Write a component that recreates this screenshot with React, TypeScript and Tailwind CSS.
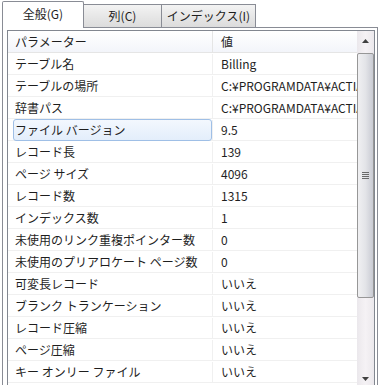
const rows: [string, string][] = [
  ['テーブル名', 'Billing'],
  ['テーブルの場所', 'C:¥PROGRAMDATA¥ACTIAN¥PSQL¥DEMODATA'],
  ['辞書パス', 'C:¥PROGRAMDATA¥ACTIAN¥PSQL¥DEMODATA'],
  ['ファイル バージョン', '9.5'],
  ['レコード長', '139'],
  ['ページ サイズ', '4096'],
  ['レコード数', '1315'],
  ['インデックス数', '1'],
  ['未使用のリンク重複ポインター数', '0'],
  ['未使用のプリアロケート ページ数', '0'],
  ['可変長レコード', 'いいえ'],
  ['ブランク トランケーション', 'いいえ'],
  ['レコード圧縮', 'いいえ'],
  ['ページ圧縮', 'いいえ'],
  ['キー オンリー ファイル', 'いいえ'],
]

const font = { fontFamily: '"Noto Sans CJK JP", "Noto Sans", sans-serif' }

export default function App() {
  return (
    <div
      className="relative h-[385px] w-[379px] overflow-hidden bg-white text-[12px] text-[#1e1e1e]"
      style={font}
    >
      {/* tabs */}
      <div className="flex h-[28px] items-end pl-[2px]">
        <div className="relative z-10 flex h-[27px] w-[82px] items-center justify-center rounded-t-[2px] border border-b-0 border-[#898c95] bg-white pb-[2px]">
          全般(G)
        </div>
        <div className="mb-[1px] flex h-[23px] w-[78px] items-center justify-center border border-b-0 border-l-0 border-[#898c95] bg-gradient-to-b from-[#f3f3f3] to-[#dcdcdc]">
          列(C)
        </div>
        <div className="mb-[1px] flex h-[23px] w-[94px] items-center justify-center border border-b-0 border-l-0 border-[#898c95] bg-gradient-to-b from-[#f3f3f3] to-[#dcdcdc]">
          インデックス(I)
        </div>
      </div>

      {/* panel */}
      <div className="-mt-[1px] ml-[2px] mr-[1px] h-[400px] border border-b-0 border-[#898c95] bg-white pl-[4px] pr-[2px] pt-[2px]">
        <div className="flex h-[400px] border border-[#828790]">
          <div className="flex-1 overflow-hidden">
            {/* header */}
            <div className="flex h-[22px] items-center border-b border-[#e5e5e5] bg-gradient-to-b from-white to-[#f3f5fa]">
              <div className="flex h-full w-[205px] items-center border-r border-[#e5e5e5] pl-[7px]">
                パラメーター
              </div>
              <div className="pl-[8px]">値</div>
            </div>
            {rows.map(([k, v], i) => (
              <div key={i} className="flex h-[22px] border-b border-[#f0f0f0] pt-[1px]">
                <div className="flex h-full w-[205px] shrink-0 items-center border-r border-[#f0f0f0] pl-[5px]">
                  {i === 3 ? (
                    <div className="flex h-[22px] w-[199px] items-center rounded-[3px] border border-[#9fbfe6] bg-gradient-to-b from-[#f3f8fe] to-[#e3eefb] pl-[1px]">
                      {k}
                    </div>
                  ) : (
                    <div className="pl-[2px]">{k}</div>
                  )}
                </div>
                <div className="flex min-w-0 flex-1 items-center overflow-hidden whitespace-nowrap pl-[8px]">
                  {v}
                </div>
              </div>
            ))}
          </div>

          {/* scrollbar */}
          <div className="flex w-[17px] shrink-0 flex-col bg-gradient-to-r from-[#ebe8ec] via-[#f5f2f5] to-[#ebe8ec]">
            <div className="flex h-[22px] items-center justify-center pb-[2px]">
              <svg width="7" height="4" viewBox="0 0 7 4">
                <path d="M3.5 0 L7 4 L0 4 Z" fill="#404040" />
              </svg>
            </div>
            <div className="relative flex h-[245px] items-center justify-center rounded-[2px] border border-[#979797] bg-gradient-to-r from-[#f0f0f2] via-[#e3e4e8] to-[#c9cbd3]">
              <div className="flex flex-col gap-[1px]">
                <div className="h-[1px] w-[7px] bg-[#6a6a6a]" />
                <div className="h-[1px] w-[7px] bg-[#6a6a6a]" />
                <div className="h-[1px] w-[7px] bg-[#6a6a6a]" />
                <div className="h-[1px] w-[7px] bg-[#6a6a6a]" />
              </div>
            </div>
            <div className="h-[72px]" />
            <div className="flex h-[17px] items-center justify-center">
              <svg width="7" height="4" viewBox="0 0 7 4">
                <path d="M0 0 L7 0 L3.5 4 Z" fill="#404040" />
              </svg>
            </div>
          </div>
        </div>
      </div>
    </div>
  )
}
